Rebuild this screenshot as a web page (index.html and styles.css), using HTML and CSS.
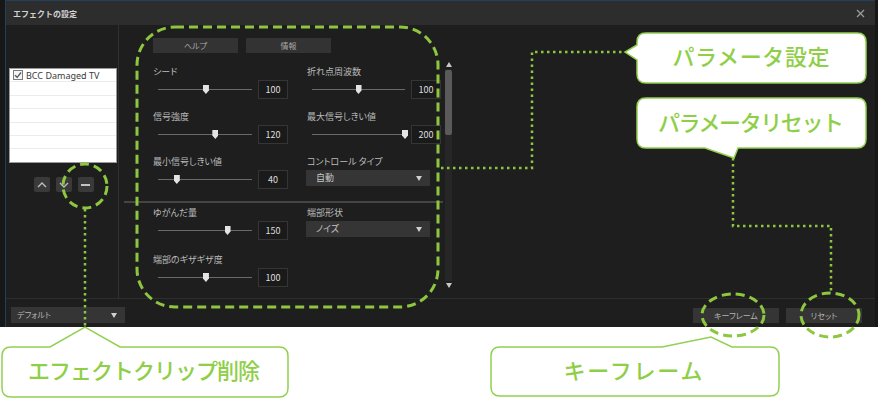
FILE: index.html
```html
<!DOCTYPE html>
<html lang="ja">
<head>
    <meta charset="UTF-8">
    <title>エフェクトの設定</title>
    <link rel="stylesheet" href="styles.css">
</head>
<body>
    <div class="screen">
        <div class="dialog">
            <div class="titlebar">
                <span class="title">エフェクトの設定</span>
                <svg class="close" width="9" height="9" viewBox="0 0 9 9"><path d="M1 1L8 8M8 1L1 8" stroke="#9a9a9a" stroke-width="1.3"/></svg>
            </div>

            <div class="main">
                <div class="side">
                    <ul class="clips">
                        <li>
                            <span class="check"><svg width="8" height="8" viewBox="0 0 8 8"><path d="M1 4.2L3.2 6.3L7 1.5" fill="none" stroke="#555" stroke-width="1.3"/></svg></span>
                            BCC Damaged TV
                        </li>
                        <li></li>
                        <li></li>
                        <li></li>
                        <li></li>
                        <li></li>
                        <li></li>
                    </ul>
                    <div class="order">
                        <button class="small-btn"><svg width="10" height="6" viewBox="0 0 10 6"><path d="M1 5L5 1L9 5" fill="none" stroke="#bdbdbd" stroke-width="1.4"/></svg></button>
                        <button class="small-btn"><svg width="10" height="6" viewBox="0 0 10 6"><path d="M1 1L5 5L9 1" fill="none" stroke="#bdbdbd" stroke-width="1.4"/></svg></button>
                        <button class="small-btn"><span class="minus"></span></button>
                    </div>
                </div>

                <div class="params">
                    <div class="tabs">
                        <button class="tab">ヘルプ</button>
                        <button class="tab">情報</button>
                    </div>
                    <div class="scroll-area">
                        <div class="groups">
                            <div class="group">
                                <div class="param">
                                    <div class="param-label">シード</div>
                                    <div class="param-ctrl">
                                        <div class="slider"><span class="thumb" style="left: 51%"></span></div>
                                        <div class="value">100</div>
                                    </div>
                                </div>
                                <div class="param">
                                    <div class="param-label">折れ点周波数</div>
                                    <div class="param-ctrl">
                                        <div class="slider narrow"><span class="thumb" style="left: 50%"></span></div>
                                        <div class="value">100</div>
                                    </div>
                                </div>
                                <div class="param">
                                    <div class="param-label">信号強度</div>
                                    <div class="param-ctrl">
                                        <div class="slider"><span class="thumb" style="left: 61%"></span></div>
                                        <div class="value">120</div>
                                    </div>
                                </div>
                                <div class="param">
                                    <div class="param-label">最大信号しきい値</div>
                                    <div class="param-ctrl">
                                        <div class="slider narrow"><span class="thumb" style="left: 100%"></span></div>
                                        <div class="value">200</div>
                                    </div>
                                </div>
                                <div class="param">
                                    <div class="param-label">最小信号しきい値</div>
                                    <div class="param-ctrl">
                                        <div class="slider"><span class="thumb" style="left: 20%"></span></div>
                                        <div class="value">40</div>
                                    </div>
                                </div>
                                <div class="param">
                                    <div class="param-label">コントロール タイプ</div>
                                    <div class="param-ctrl">
                                        <div class="select">自動<span class="arrow"></span></div>
                                    </div>
                                </div>
                            </div>

                            <div class="sep"></div>

                            <div class="group lower">
                                <div class="param">
                                    <div class="param-label">ゆがんだ量</div>
                                    <div class="param-ctrl">
                                        <div class="slider"><span class="thumb" style="left: 74%"></span></div>
                                        <div class="value">150</div>
                                    </div>
                                </div>
                                <div class="param">
                                    <div class="param-label">端部形状</div>
                                    <div class="param-ctrl">
                                        <div class="select">ノイズ<span class="arrow"></span></div>
                                    </div>
                                </div>
                                <div class="param">
                                    <div class="param-label">端部のギザギザ度</div>
                                    <div class="param-ctrl">
                                        <div class="slider"><span class="thumb" style="left: 51%"></span></div>
                                        <div class="value">100</div>
                                    </div>
                                </div>
                            </div>
                        </div>

                        <div class="scrollbar">
                            <span class="sb-arrow up"></span>
                            <div class="sb-track"><div class="sb-thumb"></div></div>
                            <span class="sb-arrow down"></span>
                        </div>
                    </div>
                </div>
            </div>

            <div class="footer">
                <div class="select preset">デフォルト<span class="arrow"></span></div>
                <div class="footer-space"></div>
                <button class="foot-btn key">キーフレーム</button>
                <button class="foot-btn reset">リセット</button>
            </div>
        </div>
    </div>

    <!-- annotations drawn over the screenshot -->
    <svg class="notes" width="878" height="400" viewBox="0 0 878 400">
        <g fill="none" stroke="#8dc63f" stroke-width="3" stroke-dasharray="9 5">
            <rect x="137" y="27" width="301" height="280" rx="38"/>
            <circle cx="85" cy="186" r="22"/>
            <ellipse cx="733" cy="315" rx="31" ry="21"/>
            <ellipse cx="830" cy="315" rx="29" ry="22"/>
        </g>
        <g fill="none" stroke="#8dc63f" stroke-width="2.5" stroke-dasharray="2.5 3.5">
            <path d="M85 209V327"/>
            <path d="M441 168H532V52H625"/>
            <path d="M733 158V226H831V293"/>
        </g>
        <g fill="#fff" stroke="#92d050" stroke-width="1.5">
            <path d="M11 347H50L85 327L120 347H279Q288 347 288 356V388Q288 397 279 397H11Q2 397 2 388V356Q2 347 11 347Z"/>
            <path d="M500 347H662L711 337L732 347H770Q779 347 779 356V387Q779 396 770 396H500Q491 396 491 387V356Q491 347 500 347Z"/>
            <path d="M646 33H857Q866 33 866 42V74Q866 83 857 83H646Q637 83 637 74V60L625 52L637 45V42Q637 33 646 33Z"/>
            <path d="M646 98H857Q866 98 866 107V139Q866 148 857 148H738L734 158L705 148H646Q637 148 637 139V107Q637 98 646 98Z"/>
        </g>
        <g class="note-text">
            <text x="144" y="379" text-anchor="middle" textLength="232" lengthAdjust="spacing">エフェクトクリップ削除</text>
            <text x="633" y="379" text-anchor="middle" textLength="139" lengthAdjust="spacing">キーフレーム</text>
            <text x="751" y="65" text-anchor="middle" textLength="157" lengthAdjust="spacing">パラメータ設定</text>
            <text x="751" y="131" text-anchor="middle" textLength="186" lengthAdjust="spacing">パラメータリセット</text>
        </g>
    </svg>
</body>
</html>
```

FILE: styles.css
```css
* {
    box-sizing: border-box;
}
body {
    margin: 0;
    width: 878px;
    height: 400px;
    position: relative;
    overflow: hidden;
    background-color: #ffffff;
    font-family: "Noto Sans CJK JP", "Noto Sans", sans-serif;
}
button {
    font-family: inherit;
    padding: 0;
    border: none;
    cursor: pointer;
}
.screen {
    height: 327px;
    padding-left: 5px;
    background-color: #171717;
}
.dialog {
    width: 870px;
    height: 327px;
    display: flex;
    flex-direction: column;
    border-left: 1px solid #22405c;
    border-top: 1px solid #22405c;
    background-color: #1e1e1e;
}

/* title bar */
.titlebar {
    height: 24px;
    flex: none;
    display: flex;
    align-items: center;
    justify-content: space-between;
    padding: 0 10px 0 7px;
    background-color: #2d2d2d;
}
.title {
    font-size: 8px;
    font-weight: 700;
    color: #d2d2d2;
}

.main {
    height: 273px;
    flex: none;
    display: flex;
}

/* left column: clip list */
.side {
    width: 113px;
    padding: 43px 0 0 3px;
    border-right: 1px solid #303030;
}
.clips {
    list-style: none;
    margin: 0;
    padding: 0;
    width: 108px;
    height: 95px;
    overflow: hidden;
    background-color: #ffffff;
    border: 1px solid #9a9a9a;
}
.clips li {
    height: 13.4px;
    display: flex;
    align-items: center;
    gap: 3px;
    padding-left: 3px;
    border-bottom: 1px solid #ececec;
    font-family: "Noto Sans", sans-serif;
    font-size: 9px;
    color: #3a3a3a;
}
.check {
    width: 10px;
    height: 10px;
    display: grid;
    place-items: center;
    border: 1px solid #7a7a7a;
    background-color: #f4f4f4;
}
.order {
    display: flex;
    justify-content: center;
    gap: 6px;
    margin-top: 14px;
}
.small-btn {
    width: 16px;
    height: 15px;
    display: grid;
    place-items: center;
    border-radius: 2px;
    background-color: #3a3a3a;
}
.minus {
    width: 9px;
    height: 2px;
    background-color: #c4c4c4;
}

/* parameter panel */
.params {
    width: 336px;
    padding-top: 13px;
}
.tabs {
    display: flex;
    gap: 8px;
    padding-left: 34px;
}
.tab {
    width: 85px;
    height: 15px;
    font-size: 8px;
    color: #a8a8a8;
    background-color: #333333;
    font-feature-settings: "palt";
}
.scroll-area {
    display: flex;
    margin-top: 9px;
}
.groups {
    width: 324px;
    padding-top: 3px;
}
.group {
    display: grid;
    grid-template-columns: 137px 134px;
    column-gap: 17px;
    row-gap: 11px;
    padding-left: 34px;
}
.group.lower {
    row-gap: 13px;
}
.sep {
    height: 2px;
    margin: 12px 0 3px 5px;
    background-color: #454545;
}
.param-label {
    height: 14px;
    line-height: 14px;
    font-size: 9px;
    color: #bcbcbc;
    white-space: nowrap;
    font-feature-settings: "palt";
}
.param-ctrl {
    height: 19px;
    margin-top: 1px;
    display: flex;
    align-items: flex-start;
}
.slider {
    position: relative;
    width: 94px;
    height: 19px;
    margin: 0 6px 0 5px;
}
.slider.narrow {
    width: 93px;
}
.slider::before {
    content: "";
    position: absolute;
    left: 0;
    right: 0;
    top: 9px;
    height: 1px;
    background-color: #6a6a6a;
}
.thumb {
    position: absolute;
    top: 5px;
    width: 6px;
    height: 9px;
    margin-left: -3px;
    background-color: #e4e4e4;
    clip-path: polygon(0 0, 100% 0, 100% 62%, 50% 100%, 0 62%);
}
.value {
    width: 30px;
    height: 19px;
    line-height: 17px;
    text-align: center;
    font-size: 9px;
    color: #dddddd;
    background-color: #1a1a1a;
    border: 1px solid #353535;
}
.select {
    position: relative;
    width: 124px;
    height: 16px;
    line-height: 16px;
    margin-left: -1px;
    padding-left: 10px;
    font-size: 9px;
    color: #c8c8c8;
    background-color: #353535;
    font-feature-settings: "palt";
}
.arrow {
    position: absolute;
    right: 8px;
    top: 6px;
    border-left: 3px solid transparent;
    border-right: 3px solid transparent;
    border-top: 5px solid #d0d0d0;
}

/* scrollbar */
.scrollbar {
    width: 7px;
    height: 226px;
    margin-left: 2px;
    display: flex;
    flex-direction: column;
    align-items: center;
}
.sb-arrow {
    border-left: 3px solid transparent;
    border-right: 3px solid transparent;
}
.sb-arrow.up {
    border-bottom: 5px solid #c8c8c8;
    margin-bottom: 2px;
}
.sb-arrow.down {
    border-top: 5px solid #c8c8c8;
    margin-top: 2px;
}
.sb-track {
    flex: 1;
    width: 7px;
    padding-top: 1px;
    background-color: #262626;
}
.sb-thumb {
    height: 65px;
    border-radius: 2px;
    background-color: #5a5a5a;
}

/* bottom bar */
.footer {
    flex: 1;
    display: flex;
    align-items: flex-start;
    gap: 7px;
    padding: 8px 13px 0 5px;
    border-top: 1px solid #2e2e2e;
}
.select.preset {
    width: 114px;
    margin-left: 0;
    padding-left: 6px;
    font-size: 8px;
    color: #b4b4b4;
}
.footer-space {
    flex: 1;
}
.foot-btn {
    height: 15px;
    margin-top: 1px;
    font-size: 8px;
    color: #b4b4b4;
    background-color: #353535;
    font-feature-settings: "palt";
}
.foot-btn.key {
    width: 86px;
}
.foot-btn.reset {
    width: 76px;
}

/* annotation layer */
.notes {
    position: absolute;
    top: 0;
    left: 0;
    pointer-events: none;
}
.note-text text {
    font-family: "Noto Sans CJK JP", sans-serif;
    font-size: 22px;
    font-weight: 500;
    fill: #8fcf48;
}
```
